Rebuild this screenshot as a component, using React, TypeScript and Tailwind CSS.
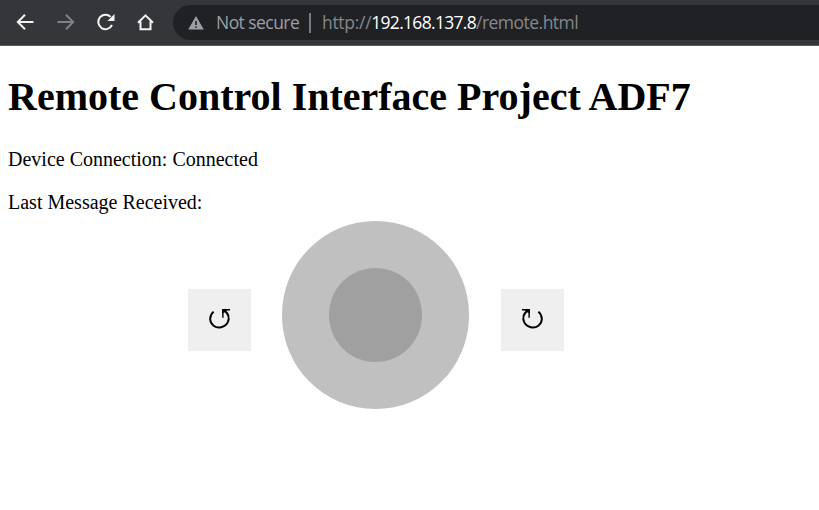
import React from "react";

function BackIcon() {
  return (
    <svg className="h-5 w-5" viewBox="0 0 20 20" fill="none" stroke="#f1f3f4" strokeWidth="2">
      <path d="M18.5 10H3M10 2.8L2.8 10l7.2 7.2" />
    </svg>
  );
}

function ForwardIcon() {
  return (
    <svg className="h-5 w-5" viewBox="0 0 20 20" fill="none" stroke="#808184" strokeWidth="2">
      <path d="M2.5 10H18M11 2.8l7.2 7.2-7.2 7.2" />
    </svg>
  );
}

function ReloadIcon() {
  return (
    <svg className="h-5 w-5" viewBox="0 0 20 20">
      <path d="M17 13A7.2 7.2 0 1 1 15.6 4.9" fill="none" stroke="#f1f3f4" strokeWidth="2" />
      <path d="M19.5 2v7h-7z" fill="#f1f3f4" />
    </svg>
  );
}

function HomeIcon() {
  return (
    <svg className="h-5 w-5" viewBox="0 0 20 20" fill="none" stroke="#f1f3f4" strokeWidth="2">
      <path d="M3 10.8L10.5 3.3l7.5 7.5M5.5 9.5V17.2h10V9.5" />
    </svg>
  );
}

function WarningIcon() {
  return (
    <svg className="h-4 w-4" viewBox="0 0 16 16">
      <path d="M8 1l7.8 13.5H.2z" fill="#9aa0a6" />
      <path d="M8 6v4M8 11.2v1.6" stroke="#202124" strokeWidth="1.6" />
    </svg>
  );
}

function RotateIcon({ clockwise = false }: { clockwise?: boolean }) {
  return (
    <svg
      className={clockwise ? "h-[62px] w-[63px] -scale-x-100" : "h-[62px] w-[63px]"}
      viewBox="0 0 63 62"
      fill="none"
      stroke="black"
    >
      <path d="M25.6 22.6C20.8 27 21.2 33.5 25.6 36.7C30 39.8 36.5 38.6 39.4 34C42.2 29.4 40.6 23.8 35.3 21.2" strokeWidth="1.9" />
      <path d="M34.9 28.7V20.7H42" strokeWidth="1.4" />
      <path d="M34.2 20h6l-2.5 2.8-3.5 1.8z" fill="black" stroke="none" />
    </svg>
  );
}

function BrowserBar() {
  return (
    <header className="flex h-[46px] border-b border-[#5b5c5f] bg-[#35363a]">
      <nav className="flex h-11 w-[173px] shrink-0 items-center gap-5 pl-[15px]">
        <BackIcon />
        <ForwardIcon />
        <ReloadIcon />
        <HomeIcon />
      </nav>
      <div className="mt-[5px] flex h-[35px] flex-1 items-center rounded-l-full bg-[#202124] pl-[15px] font-['Open_Sans',sans-serif] text-[17.5px] whitespace-nowrap">
        <WarningIcon />
        <span className="ml-3 w-[84px] tracking-[-0.55px] text-[#9aa0a6]">Not secure</span>
        <span className="ml-[9px] h-5 w-[2px] bg-[#76797d]" />
        <span className="ml-[11px] tracking-[-0.3px] text-[#85888b]">
          http://<span className="tracking-[-0.7px] text-white">192.168.137.8</span>
          <span className="tracking-[-0.52px]">/remote.html</span>
        </span>
      </div>
    </header>
  );
}

export default function App() {
  return (
    <div className="h-[510px] overflow-hidden bg-white">
      <BrowserBar />
      <main className="px-2 pt-[28px] font-['Liberation_Serif',serif] text-black">
        <h1 className="text-[40px] leading-[46px] font-bold whitespace-nowrap">
          Remote Control Interface Project ADF7
        </h1>
        <p className="mt-[28px] text-[20px] leading-[23px]">Device Connection: Connected</p>
        <p className="mt-5 text-[20px] leading-[23px]">Last Message Received:</p>
        <div className="mt-[7px] ml-[180px] flex">
          <button className="mt-[68px] h-[62px] w-[63px] bg-[#efefef]" aria-label="Rotate left">
            <RotateIcon />
          </button>
          <div className="ml-[31px] flex h-[188px] w-[187px] items-center justify-center rounded-full bg-[#c0c0c0]">
            <div className="h-[94px] w-[93px] rounded-full bg-[#a0a0a0]" />
          </div>
          <button className="mt-[68px] ml-[32px] h-[62px] w-[63px] bg-[#efefef]" aria-label="Rotate right">
            <RotateIcon clockwise />
          </button>
        </div>
      </main>
    </div>
  );
}
